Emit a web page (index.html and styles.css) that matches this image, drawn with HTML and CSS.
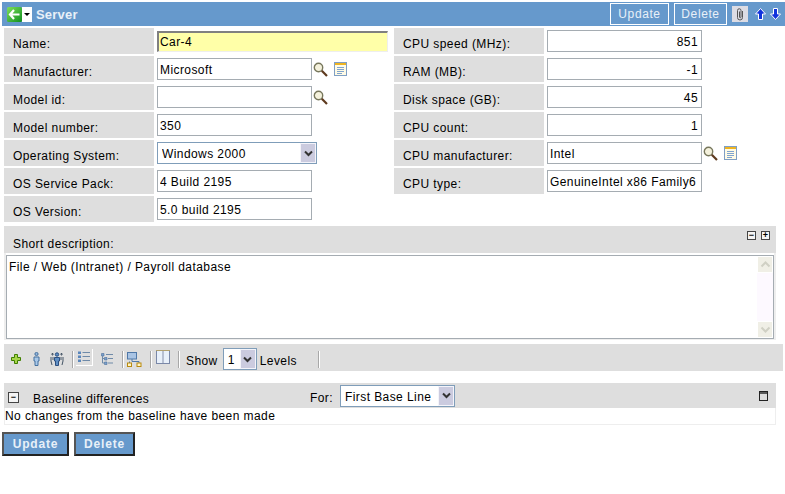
FILE: index.html
```html
<!DOCTYPE html>
<html lang="en">
<head>
    <meta charset="UTF-8">
    <title>Server</title>
    <link rel="stylesheet" href="styles.css">
</head>
<body>
    <header class="titlebar">
        <svg class="back-icon" width="15" height="15" viewBox="0 0 15 15">
            <defs>
                <linearGradient id="backFill" x1="0" y1="0" x2="1" y2="1">
                    <stop offset="0" stop-color="#7fe05a"/>
                    <stop offset="1" stop-color="#0f8f20"/>
                </linearGradient>
            </defs>
            <rect width="15" height="15" rx="1.5" fill="url(#backFill)"/>
            <path d="M7 3 L3 7.5 L7 12 M3.5 7.5 H12.5" fill="none" stroke="#fff" stroke-width="2.2"/>
        </svg>
        <span class="back-menu"><svg width="10" height="15" viewBox="0 0 10 15"><path d="M2 6 H8 L5 9 Z" fill="#000"/></svg></span>
        <h1>Server</h1>
        <div class="title-actions">
            <button class="title-btn btn-update" type="button">Update</button>
            <button class="title-btn btn-remove" type="button">Delete</button>
            <span class="clip-box">
                <svg width="16" height="16" viewBox="0 0 16 16"><path d="M10.5 5 V11.5 A2.5 2.5 0 0 1 5.5 11.5 V4.5 A1.7 1.7 0 0 1 9 4.5 V11 A.7 .7 0 0 1 7.5 11 V5.5" fill="none" stroke="#555" stroke-width="1"/></svg>
            </span>
            <svg class="arrow-up" width="11" height="12" viewBox="0 0 11 12"><path d="M5.5 .5 L10.5 6 H7.5 V11.5 H3.5 V6 H.5 Z" fill="#1133dd" stroke="#fff"/></svg>
            <svg class="arrow-down" width="11" height="12" viewBox="0 0 11 12"><path d="M5.5 11.5 L10.5 6 H7.5 V.5 H3.5 V6 H.5 Z" fill="#1133dd" stroke="#fff"/></svg>
        </div>
    </header>

    <main>
        <div class="fields">
            <div class="field-col field-col-left">
                <div class="row">
                    <label class="row-label">Name:</label>
                    <input class="text-input name-input" type="text" value="Car-4">
                </div>
                <div class="row">
                    <label class="row-label">Manufacturer:</label>
                    <input class="text-input" type="text" value="Microsoft">
                    <svg class="search-icon" width="15" height="15" viewBox="0 0 15 15"><circle cx="5.5" cy="5.5" r="4.2" fill="#f4f1dc" stroke="#77775c" stroke-width="1.4"/><path d="M8.8 8.8 L14 14" stroke="#5e3a1e" stroke-width="2.2"/></svg>
                    <svg class="note-icon" width="13" height="15" viewBox="0 0 13 15"><rect x=".5" y=".5" width="12" height="13" fill="#fffbe6" stroke="#7f9fc4"/><rect x="1" y="1" width="11" height="2" fill="#eeb422"/><path d="M3 5.5 H10 M3 7.5 H10 M3 9.5 H10 M3 11.5 H8" stroke="#7fa4cf"/></svg>
                </div>
                <div class="row">
                    <label class="row-label">Model id:</label>
                    <input class="text-input" type="text" value="">
                    <svg class="search-icon" width="15" height="15" viewBox="0 0 15 15"><circle cx="5.5" cy="5.5" r="4.2" fill="#f4f1dc" stroke="#77775c" stroke-width="1.4"/><path d="M8.8 8.8 L14 14" stroke="#5e3a1e" stroke-width="2.2"/></svg>
                </div>
                <div class="row">
                    <label class="row-label">Model number:</label>
                    <input class="text-input" type="text" value="350">
                </div>
                <div class="row">
                    <label class="row-label">Operating System:</label>
                    <span class="fake-select os-select">
                        <select><option>Windows 2000</option></select>
                        <span class="select-arrow"><svg width="9" height="7" viewBox="0 0 9 7"><path d="M1 1.5 L4.5 5 L8 1.5" fill="none" stroke="#333" stroke-width="2"/></svg></span>
                    </span>
                </div>
                <div class="row">
                    <label class="row-label">OS Service Pack:</label>
                    <input class="text-input" type="text" value="4 Build 2195">
                </div>
                <div class="row">
                    <label class="row-label">OS Version:</label>
                    <input class="text-input" type="text" value="5.0 build 2195">
                </div>
            </div>
            <div class="field-col">
                <div class="row">
                    <label class="row-label">CPU speed (MHz):</label>
                    <input class="text-input num" type="text" value="851">
                </div>
                <div class="row">
                    <label class="row-label">RAM (MB):</label>
                    <input class="text-input num" type="text" value="-1">
                </div>
                <div class="row">
                    <label class="row-label">Disk space (GB):</label>
                    <input class="text-input num" type="text" value="45">
                </div>
                <div class="row">
                    <label class="row-label">CPU count:</label>
                    <input class="text-input num" type="text" value="1">
                </div>
                <div class="row">
                    <label class="row-label">CPU manufacturer:</label>
                    <input class="text-input" type="text" value="Intel">
                    <svg class="search-icon" width="15" height="15" viewBox="0 0 15 15"><circle cx="5.5" cy="5.5" r="4.2" fill="#f4f1dc" stroke="#77775c" stroke-width="1.4"/><path d="M8.8 8.8 L14 14" stroke="#5e3a1e" stroke-width="2.2"/></svg>
                    <svg class="note-icon" width="13" height="15" viewBox="0 0 13 15"><rect x=".5" y=".5" width="12" height="13" fill="#fffbe6" stroke="#7f9fc4"/><rect x="1" y="1" width="11" height="2" fill="#eeb422"/><path d="M3 5.5 H10 M3 7.5 H10 M3 9.5 H10 M3 11.5 H8" stroke="#7fa4cf"/></svg>
                </div>
                <div class="row">
                    <label class="row-label">CPU type:</label>
                    <input class="text-input" type="text" value="GenuineIntel x86 Family6">
                </div>
            </div>
        </div>

        <section class="desc">
            <div class="desc-head">
                <span>Short description:</span>
                <span class="desc-toggles">
                    <span class="box-btn">&minus;</span>
                    <span class="box-btn">+</span>
                </span>
            </div>
            <div class="desc-body">
                <div class="desc-text">File / Web (Intranet) / Payroll database</div>
                <div class="scrollbar">
                    <span class="scroll-btn"><svg width="11" height="7" viewBox="0 0 11 7"><path d="M1.5 5.5 L5.5 1.5 L9.5 5.5" fill="none" stroke="#d0d0c4" stroke-width="2"/></svg></span>
                    <span class="scroll-btn"><svg width="11" height="7" viewBox="0 0 11 7"><path d="M1.5 1.5 L5.5 5.5 L9.5 1.5" fill="none" stroke="#d0d0c4" stroke-width="2"/></svg></span>
                </div>
            </div>
        </section>

        <div class="toolbar">
            <svg class="tool tool-add" width="10" height="10" viewBox="0 0 10 10"><path d="M3.5 .5 H6.5 V3.5 H9.5 V6.5 H6.5 V9.5 H3.5 V6.5 H.5 V3.5 H3.5 Z" fill="#a6d44a" stroke="#3f7f00"/></svg>
            <svg class="tool tool-person" width="7" height="14" viewBox="0 0 7 14"><circle cx="3.5" cy="2" r="1.6" fill="#8fb4dc" stroke="#45719f"/><path d="M1 5 H6 V9 H5 V13.5 H2 V9 H1 Z" fill="#a9c8e8" stroke="#45719f"/></svg>
            <svg class="tool tool-people" width="14" height="14" viewBox="0 0 14 14"><circle cx="7" cy="2.5" r="1.7" fill="#5f8fc4" stroke="#2c4f80"/><path d="M4.5 5.5 H9.5 V9 H8.5 V13.5 H5.5 V9 H4.5 Z" fill="#5f8fc4" stroke="#2c4f80"/><path d="M2 1.5 H3 V3 H2 Z M11 1.5 H12 V3 H11 Z M1 5 V9 L2 13 M3 5 V8 M13 5 V9 L12 13 M11 5 V8" stroke="#456" fill="none"/></svg>
            <span class="tool-sep sep-a"></span>
            <span class="tool-active">
                <svg width="12" height="12" viewBox="0 0 12 12"><path d="M0 .5 H3 V3 H0 Z M0 4.5 H3 V7 H0 Z M0 8.5 H3 V11 H0 Z" fill="#5a86bb"/><path d="M4.5 1.5 H12 M4.5 5.5 H12 M4.5 9.5 H12" stroke="#6f8aa8"/></svg>
            </span>
            <svg class="tool tool-tree" width="12" height="12" viewBox="0 0 12 12"><path d="M.5 .5 H3 V3 H.5 Z M3.5 4.5 H6 V7 H3.5 Z M3.5 9 H6 V11.5 H3.5 Z" fill="#7ba0cc" stroke="#4a6f9c" stroke-width=".6"/><path d="M1.5 3 V10 H3.5 M1.5 5.5 H3.5 M5 1.5 H12 M7 5.5 H12 M7 10 H12" stroke="#6f8aa8" fill="none"/></svg>
            <span class="tool-sep sep-b"></span>
            <svg class="tool tool-org" width="15" height="15" viewBox="0 0 15 15"><rect x=".5" y=".5" width="9" height="6.5" fill="#a9c4e4" stroke="#4f78a8"/><path d="M5 7 V9.5 H12 V11 M2.5 9.5 V11" stroke="#4f78a8" fill="none"/><rect x=".5" y="11" width="4" height="3.5" fill="#fff3c0" stroke="#b88a10"/><rect x="10" y="11" width="4" height="3.5" fill="#fff3c0" stroke="#b88a10"/></svg>
            <span class="tool-sep sep-c"></span>
            <svg class="tool tool-cols" width="14" height="14" viewBox="0 0 14 14"><rect x=".5" y=".5" width="13" height="13" fill="#fff" stroke="#7a88a8"/><rect x="1" y="1" width="5.5" height="12" fill="#e8f0fa"/><rect x="7.5" y="1" width="5.5" height="12" fill="#e8f0fa"/><path d="M7 1 V13" stroke="#7a88a8"/><path d="M0 .5 H14" stroke="#b0a070"/></svg>
            <span class="tool-sep sep-d"></span>
            <span class="show-label">Show</span>
            <span class="fake-select level-select">
                <select><option>1</option></select>
                <span class="select-arrow"><svg width="9" height="7" viewBox="0 0 9 7"><path d="M1 1.5 L4.5 5 L8 1.5" fill="none" stroke="#333" stroke-width="2"/></svg></span>
            </span>
            <span class="show-label">Levels</span>
            <span class="tool-sep sep-e"></span>
        </div>

        <section class="baseline">
            <div class="baseline-head">
                <span class="box-btn box-btn-big">&minus;</span>
                <span class="baseline-title">Baseline differences</span>
                <span class="for-label">For:</span>
                <span class="fake-select base-select">
                    <select><option>First Base Line</option></select>
                    <span class="select-arrow"><svg width="9" height="7" viewBox="0 0 9 7"><path d="M1 1.5 L4.5 5 L8 1.5" fill="none" stroke="#333" stroke-width="2"/></svg></span>
                </span>
                <svg class="restore-icon" width="9" height="10" viewBox="0 0 9 10"><rect x=".5" y=".5" width="8" height="9" fill="none" stroke="#222"/><path d="M1 2 H8" stroke="#222" stroke-width="1.4"/></svg>
            </div>
            <div class="baseline-body">No changes from the baseline have been made</div>
        </section>

        <div class="actions">
            <button class="big-btn btn-update" type="button">Update</button>
            <button class="big-btn btn-remove" type="button">Delete</button>
        </div>
    </main>
</body>
</html>
```

FILE: styles.css
```css
* {
    box-sizing: border-box;
}

body {
    margin: 0;
    padding: 2px 0 0;
    background: #fff;
    color: #000;
    font-family: "Liberation Sans", Arial, sans-serif;
    font-size: 12px;
    letter-spacing: 0.42px;
}

/* title bar */
.titlebar {
    display: flex;
    align-items: center;
    height: 24px;
    margin-left: 2px;
    padding-left: 5px;
    background: #6699cc;
}

.back-icon {
    display: block;
}

.back-menu {
    display: block;
    width: 10px;
    height: 15px;
    background: #fff;
}

.back-menu svg {
    display: block;
}

.titlebar h1 {
    margin: 0 0 0 4px;
    font-size: 13px;
    font-weight: bold;
    letter-spacing: 0.2px;
    color: #e8f0f8;
}

.title-actions {
    display: flex;
    align-items: center;
    margin-left: auto;
    padding-right: 4px;
}

.title-btn {
    height: 22px;
    padding: 0;
    border: 1px solid #fff;
    background: #6699cc;
    color: #e8f0f8;
    font-family: inherit;
    font-size: 12px;
    letter-spacing: 0.6px;
}

.title-btn.btn-update {
    width: 59px;
    margin-right: 5px;
}

.title-btn.btn-remove {
    width: 53px;
    margin-right: 5px;
}

.clip-box {
    display: flex;
    align-items: center;
    justify-content: center;
    width: 16px;
    height: 16px;
    background: #dcdce4;
    margin-right: 7px;
}

.arrow-up {
    margin-right: 4px;
}

/* form rows */
.fields {
    display: flex;
    margin-top: 2px;
    padding-left: 4px;
}

.field-col {
    display: flex;
    flex-direction: column;
    gap: 2px;
}

.field-col-left {
    width: 390px;
}

.row {
    display: flex;
    align-items: center;
    height: 26px;
}

.row-label {
    display: block;
    flex: none;
    width: 150px;
    height: 26px;
    margin-right: 3px;
    padding: 9px 0 0 9px;
    background: #dedede;
    line-height: 14px;
}

.text-input {
    flex: none;
    width: 155px;
    height: 22px;
    padding: 2px 2px 0;
    border: 1px solid #a5acb2;
    background: #fff;
    font-family: inherit;
    font-size: 12px;
    letter-spacing: inherit;
    color: #000;
}

.text-input.num {
    padding-right: 3px;
    text-align: right;
}

.name-input {
    width: 231px;
    height: 21px;
    padding: 0 2px 0 1px;
    background: #ffffa8;
    border: 1px solid #eeeeee;
    border-top: 2px solid #808080;
    border-left: 2px solid #808080;
}

.search-icon {
    flex: none;
    margin-left: 1px;
}

.note-icon {
    flex: none;
    margin-left: 6px;
}

/* home-made select boxes */
.fake-select {
    display: flex;
    flex: none;
    height: 22px;
    border: 1px solid #7f9db9;
    background: #fff;
}

.fake-select select {
    flex: 1;
    min-width: 0;
    padding: 2px 0 0 4px;
    border: 0;
    background: #fff;
    font-family: inherit;
    font-size: 12px;
    letter-spacing: inherit;
    appearance: none;
    -webkit-appearance: none;
}

.select-arrow {
    display: flex;
    align-items: center;
    justify-content: center;
    flex: none;
    width: 16px;
    background: #cbcbdf;
    border: 1px solid #f4f4fa;
}

.os-select {
    width: 160px;
}

.level-select {
    width: 34px;
}

.base-select {
    width: 115px;
}

/* short description */
.desc {
    width: 772px;
    margin: 4px 0 0 4px;
}

.desc-head {
    display: flex;
    justify-content: space-between;
    height: 27px;
    padding: 11px 6px 0 9px;
    background: #dedede;
    line-height: 14px;
}

.desc-toggles {
    display: flex;
    gap: 5px;
    margin-top: -6px;
}

.box-btn {
    display: block;
    width: 9px;
    height: 9px;
    border: 1px solid #444;
    background: #f4f4f4;
    font-size: 9px;
    font-weight: bold;
    line-height: 7px;
    letter-spacing: 0;
    text-align: center;
    color: #000;
}

.box-btn-big {
    flex: none;
    width: 11px;
    height: 11px;
    margin-top: 4px;
    line-height: 9px;
}

.desc-body {
    display: flex;
    height: 87px;
    padding-top: 2px;
    border: solid #eeeeee;
    border-width: 0 2px 1px 2px;
}

.desc-text {
    flex: 1;
    padding: 4px 2px;
    border: 1px solid #a5acb2;
    border-right: 0;
}

.scrollbar {
    display: flex;
    flex-direction: column;
    justify-content: space-between;
    width: 17px;
    background: #fdf9ff;
    border: solid #a5acb2;
    border-width: 1px 1px 1px 0;
}

.scroll-btn {
    display: flex;
    align-items: center;
    justify-content: center;
    height: 17px;
    background: #f0efe6;
    border: 1px solid #fff;
}

/* toolbar */
.toolbar {
    display: flex;
    align-items: center;
    height: 27px;
    margin: 4px 2px 0 4px;
    padding: 3px 0 0 7px;
    background: #dedede;
}

.tool {
    flex: none;
}

.tool-person {
    margin-left: 12px;
}

.tool-people {
    margin-left: 10px;
}

.tool-sep {
    flex: none;
    width: 2px;
    height: 17px;
    background: #a8a8a8;
    border-right: 1px solid #fff;
}

.sep-a {
    margin: 0 2px 0 8px;
}

.tool-active {
    display: flex;
    align-items: center;
    justify-content: center;
    flex: none;
    width: 17px;
    height: 17px;
    margin-bottom: 3px;
    border: solid #fff;
    border-width: 0 1px 1px 0;
}

.tool-tree {
    margin-left: 8px;
}

.sep-b {
    margin: 0 3px 0 9px;
}

.sep-c {
    margin: 0 4px 0 8px;
}

.tool-cols {
    margin-bottom: 4px;
}

.sep-d {
    margin: 0 6px 0 8px;
}

.show-label {
    padding-top: 4px;
}

.level-select {
    margin: 0 3px 0 5px;
}

.sep-e {
    margin-left: 21px;
}

/* baseline section */
.baseline {
    width: 772px;
    margin: 12px 0 0 4px;
}

.baseline-head {
    display: flex;
    align-items: center;
    height: 25px;
    padding: 0 8px 0 4px;
    background: #dedede;
}

.baseline-title {
    margin-left: 14px;
    padding-top: 7px;
}

.for-label {
    margin-left: auto;
    padding-top: 5px;
}

.base-select {
    margin: 0 304px 0 7px;
}

.restore-icon {
    flex: none;
}

.baseline-body {
    height: 17px;
    border: solid #eeeeee;
    border-width: 0 1px 1px 1px;
    line-height: 16px;
}

/* bottom buttons */
.actions {
    display: flex;
    gap: 5px;
    margin: 7px 0 0 2px;
}

.big-btn {
    height: 24px;
    padding: 0;
    border: 2px solid #333333;
    border-color: #555 #222 #222 #555;
    background: #6699cc;
    color: #e8f0f8;
    font-family: inherit;
    font-size: 12px;
    font-weight: bold;
    letter-spacing: 0.8px;
}

.big-btn.btn-update {
    width: 67px;
}

.big-btn.btn-remove {
    width: 61px;
}
```
